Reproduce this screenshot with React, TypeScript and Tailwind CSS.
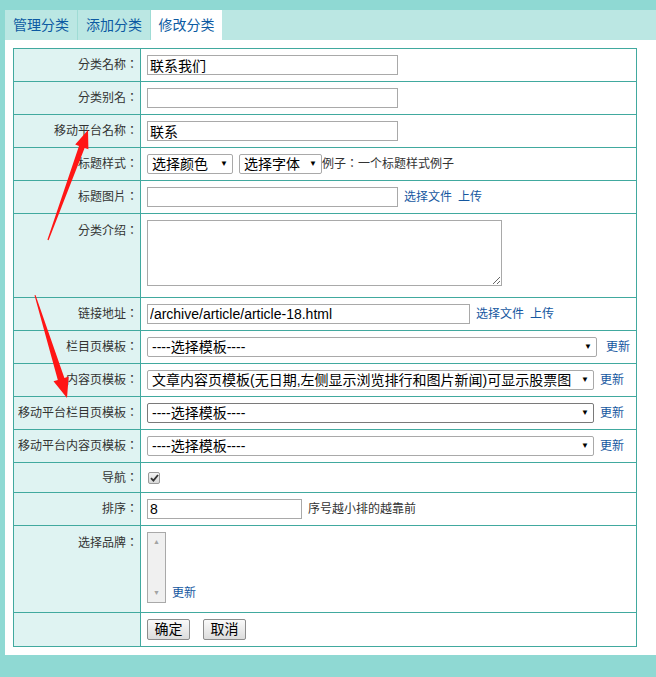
import React from 'react'

const font = "font-['Liberation_Sans','Noto_Sans_CJK_SC',sans-serif]"
// TC face keeps the full-width colon centred, like the original page
const labelCell =
  "w-[127px] border border-[#41a99f] bg-[#dff3f2] pr-[2px] text-right text-[12px] text-[#333] font-['Liberation_Sans','Noto_Sans_CJK_TC',sans-serif]"
const valueCell = 'border border-[#41a99f] bg-white pl-[6px] text-[12px] text-[#333]'
const inputCls =
  'h-[20px] border border-[#a9a9a9] bg-white px-[2px] text-[14px] leading-[18px] text-black outline-none'
const linkCls = 'text-[12px] text-[#15579f]'

const Select: React.FC<{ width: string; text: string; dark?: boolean }> = ({ width, text, dark }) => (
  <span className={`relative inline-block align-middle ${width}`}>
    <select
      defaultValue="a"
      className={`block h-[20px] w-full appearance-none rounded-[2px] border bg-white pl-[4px] pr-[18px] text-[14px] leading-[18px] text-black ${
        dark ? 'border-[#7a7a7a]' : 'border-[#a9a9a9]'
      }`}
    >
      <option value="a">{text}</option>
    </select>
    <span className="pointer-events-none absolute right-[5px] top-[5px] text-[8px] leading-[10px] text-black">
      ▼
    </span>
  </span>
)

const Label: React.FC<{ children: React.ReactNode; top?: boolean }> = ({ children, top }) => (
  <td className={`${labelCell} ${top ? 'pt-[8px] align-top' : 'align-middle'}`}>{children}</td>
)

export default function App() {
  return (
    <div className={`relative min-h-[677px] w-[656px] bg-[#8fd9d3] pl-[5px] pt-[10px] ${font}`}>
      {/* Tabs */}
      <div className="flex h-[30px] bg-[#bbe7e3]">
        <div className="flex w-[73px] items-center justify-center border-r border-[#9fdcd5] text-[14px] text-[#0c5aa2]">
          管理分类
        </div>
        <div className="flex w-[73px] items-center justify-center border-r border-[#9fdcd5] text-[14px] text-[#0c5aa2]">
          添加分类
        </div>
        <div className="flex w-[71px] items-center justify-center bg-white text-[14px] text-[#0c5aa2]">
          修改分类
        </div>
      </div>

      {/* Form panel */}
      <div className="bg-white px-[8px] pb-[8px] pt-[8px]">
        <table className="w-[624px] border-collapse">
          <tbody>
            <tr className="h-[33px]">
              <Label>分类名称：</Label>
              <td className={valueCell}>
                <input className={`${inputCls} w-[251px]`} defaultValue="联系我们" />
              </td>
            </tr>
            <tr className="h-[33px]">
              <Label>分类别名：</Label>
              <td className={valueCell}>
                <input className={`${inputCls} w-[251px]`} defaultValue="" />
              </td>
            </tr>
            <tr className="h-[33px]">
              <Label>移动平台名称：</Label>
              <td className={valueCell}>
                <input className={`${inputCls} w-[251px]`} defaultValue="联系" />
              </td>
            </tr>
            <tr className="h-[33px]">
              <Label>标题样式：</Label>
              <td className={valueCell}>
                <div className="flex items-center">
                  <Select width="w-[86px]" text="选择颜色" />
                  <span className="ml-[6px]">
                    <Select width="w-[83px]" text="选择字体" />
                  </span>
                  <span className="font-['Liberation_Sans','Noto_Sans_CJK_TC',sans-serif]">
                    例子：一个标题样式例子
                  </span>
                </div>
              </td>
            </tr>
            <tr className="h-[33px]">
              <Label>标题图片：</Label>
              <td className={valueCell}>
                <div className="flex items-center">
                  <input className={`${inputCls} w-[251px]`} defaultValue="" />
                  <span className={`${linkCls} ml-[6px]`}>选择文件</span>
                  <span className={`${linkCls} ml-[6px]`}>上传</span>
                </div>
              </td>
            </tr>
            <tr className="h-[84px]">
              <Label top>分类介绍：</Label>
              <td className={`${valueCell} pt-[6px] align-top`}>
                <textarea className="block h-[66px] w-[355px] resize border border-[#a9a9a9] bg-white outline-none" />
              </td>
            </tr>
            <tr className="h-[33px]">
              <Label>链接地址：</Label>
              <td className={valueCell}>
                <div className="flex items-center">
                  <input
                    className={`${inputCls} w-[323px]`}
                    defaultValue="/archive/article/article-18.html"
                  />
                  <span className={`${linkCls} ml-[6px]`}>选择文件</span>
                  <span className={`${linkCls} ml-[6px]`}>上传</span>
                </div>
              </td>
            </tr>
            <tr className="h-[33px]">
              <Label>栏目页模板：</Label>
              <td className={valueCell}>
                <div className="flex items-center">
                  <Select width="w-[450px]" text="----选择模板----" />
                  <span className={`${linkCls} ml-[9px]`}>更新</span>
                </div>
              </td>
            </tr>
            <tr className="h-[33px]">
              <Label>内容页模板：</Label>
              <td className={valueCell}>
                <div className="flex items-center">
                  <Select
                    width="w-[447px]"
                    text="文章内容页模板(无日期,左侧显示浏览排行和图片新闻)可显示股票图"
                  />
                  <span className={`${linkCls} ml-[6px]`}>更新</span>
                </div>
              </td>
            </tr>
            <tr className="h-[33px]">
              <Label>移动平台栏目页模板：</Label>
              <td className={valueCell}>
                <div className="flex items-center">
                  <Select width="w-[447px]" text="----选择模板----" dark />
                  <span className={`${linkCls} ml-[6px]`}>更新</span>
                </div>
              </td>
            </tr>
            <tr className="h-[33px]">
              <Label>移动平台内容页模板：</Label>
              <td className={valueCell}>
                <div className="flex items-center">
                  <Select width="w-[447px]" text="----选择模板----" />
                  <span className={`${linkCls} ml-[6px]`}>更新</span>
                </div>
              </td>
            </tr>
            <tr className="h-[30px]">
              <Label>导航：</Label>
              <td className={valueCell}>
                <span className="ml-[1px] flex h-[12px] w-[12px] items-center justify-center rounded-[2px] border border-[#9a9a9a] bg-gradient-to-b from-[#f4f4f4] to-[#d8d8d8]">
                  <svg width="9" height="8" viewBox="0 0 9 8">
                    <path d="M1 4.2 L3.4 6.6 L8 1" fill="none" stroke="#333" strokeWidth="1.8" />
                  </svg>
                </span>
              </td>
            </tr>
            <tr className="h-[33px]">
              <Label>排序：</Label>
              <td className={valueCell}>
                <div className="flex items-center">
                  <input className={`${inputCls} w-[155px]`} defaultValue="8" />
                  <span className="ml-[6px]">序号越小排的越靠前</span>
                </div>
              </td>
            </tr>
            <tr className="h-[87px]">
              <Label top>选择品牌：</Label>
              <td className={`${valueCell} pt-[6px] align-top`}>
                <div className="flex items-end">
                  <div className="flex h-[71px] w-[19px] flex-col items-center justify-between border border-[#a9a9a9] bg-[#f0f0f0] py-[5px] text-[7px] leading-[8px] text-[#a3a3a3]">
                    <span>▲</span>
                    <span>▼</span>
                  </div>
                  <span className={`${linkCls} mb-[1px] ml-[6px]`}>更新</span>
                </div>
              </td>
            </tr>
            <tr className="h-[34px]">
              <td className={labelCell}></td>
              <td className={valueCell}>
                <div className="flex items-center gap-[13px]">
                  <button className="h-[21px] w-[43px] rounded-[2px] border border-[#8c8c8c] bg-gradient-to-b from-[#fafafa] to-[#dcdcdc] text-[14px] leading-[19px] text-black">
                    确定
                  </button>
                  <button className="h-[21px] w-[43px] rounded-[2px] border border-[#8c8c8c] bg-gradient-to-b from-[#fafafa] to-[#dcdcdc] text-[14px] leading-[19px] text-black">
                    取消
                  </button>
                </div>
              </td>
            </tr>
          </tbody>
        </table>
      </div>

      {/* Red annotation arrows */}
      <svg
        className="pointer-events-none absolute left-0 top-0"
        width="656"
        height="677"
        viewBox="0 0 656 677"
      >
        <polygon
          points="88,130 88.4,149.3 84.6,147.9 48.6,240.2 47.4,239.8 79,145.9 75.2,144.5"
          fill="#ff1515"
        />
        <polygon
          points="67,398 68.7,376.5 64.4,377.9 35.5,295 34.5,295.3 57.8,379.9 53.5,381.3"
          fill="#ff1515"
        />
      </svg>
    </div>
  )
}
